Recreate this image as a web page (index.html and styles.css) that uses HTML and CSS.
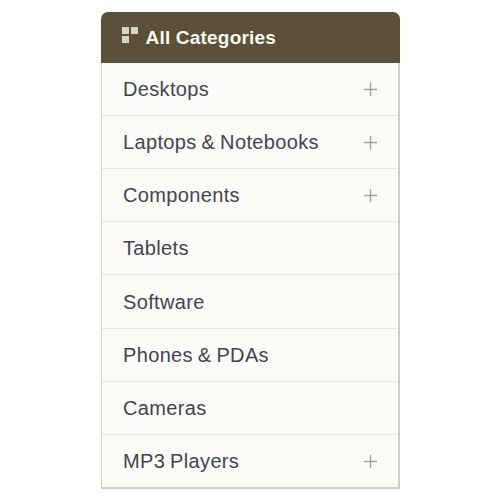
FILE: index.html
```html
<!DOCTYPE html>
<html lang="en">
<head>
<meta charset="utf-8">
<title>All Categories</title>
<link rel="stylesheet" href="styles.css">
</head>
<body>
<nav class="panel">
  <div class="head">
    <span class="grid-icon"><i></i><i></i><i></i></span>
    <span class="head-text">All Categories</span>
  </div>
  <ul class="list">
    <li class="row"><span>Desktops</span><svg class="plus" viewBox="0 0 13 13"><path d="M6.5 0v13M0 6.5h13"/></svg></li>
    <li class="row"><span>Laptops &amp; Notebooks</span><svg class="plus" viewBox="0 0 13 13"><path d="M6.5 0v13M0 6.5h13"/></svg></li>
    <li class="row"><span>Components</span><svg class="plus" viewBox="0 0 13 13"><path d="M6.5 0v13M0 6.5h13"/></svg></li>
    <li class="row"><span>Tablets</span></li>
    <li class="row"><span>Software</span></li>
    <li class="row"><span>Phones &amp; PDAs</span></li>
    <li class="row"><span>Cameras</span></li>
    <li class="row"><span>MP3 Players</span><svg class="plus" viewBox="0 0 13 13"><path d="M6.5 0v13M0 6.5h13"/></svg></li>
  </ul>
</nav>
</body>
</html>
```
FILE: styles.css
```css
html, body { margin: 0; padding: 0; background: #fff; }
body { padding: 12px 100px 0 101px; font-family: "Liberation Sans", Arial, sans-serif; }
.panel { width: 299px; box-sizing: border-box; }
.head {
  height: 51px; box-sizing: border-box; padding: 0 0 0 21px;
  display: flex; align-items: center; gap: 8px;
  background: #5a5138; color: #fbf8ef; font-size: 19px; font-weight: bold;
  border-radius: 7px 7px 0 0;
}
.head-text { letter-spacing: 0.2px; padding-top: 1px; }
.grid-icon {
  display: grid; grid-template-columns: 7px 7px; grid-template-rows: 7px 7px; gap: 1.5px;
  margin-top: -5px;
}
.grid-icon i { background: #d9d5c6; display: block; }
.list {
  list-style: none; margin: 0; padding: 0;
  background: #fbfbf8; border: solid #cfcfcd; border-width: 0 2px 2px 1px;
}
.row {
  height: 53px; box-sizing: border-box; padding: 0 21px;
  display: flex; align-items: center; justify-content: space-between;
  color: #44444f; font-size: 20px; letter-spacing: 0.35px; word-spacing: -1px;
  border-bottom: 1px solid #e6e6e2;
}
.row:nth-child(n+5) { padding-top: 1px; }
.row:nth-child(5) { height: 54px; }
.row:last-child { border-bottom: 0; height: 52px; }
.plus { width: 13px; height: 13px; fill: none; stroke: #a3a3a3; stroke-width: 1.4; }
```
